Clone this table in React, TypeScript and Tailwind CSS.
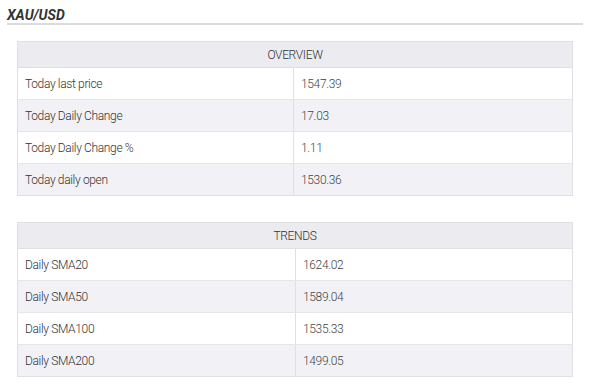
import React from "react";

type Row = [string, string];

const overview: Row[] = [
  ["Today last price", "1547.39"],
  ["Today Daily Change", "17.03"],
  ["Today Daily Change %", "1.11"],
  ["Today daily open", "1530.36"],
];

const trends: Row[] = [
  ["Daily SMA20", "1624.02"],
  ["Daily SMA50", "1589.04"],
  ["Daily SMA100", "1535.33"],
  ["Daily SMA200", "1499.05"],
];

function DataTable({
  title,
  rows,
  firstColClass,
}: {
  title: string;
  rows: Row[];
  firstColClass: string;
}) {
  return (
    <div className="border border-[#e0e0e3] text-[12px] font-light tracking-[-0.35px] text-[#333]">
      <div className="h-[26px] flex items-center justify-center bg-[#ececf0] border-b border-[#e0e0e3]">
        {title}
      </div>
      {rows.map(([label, value], i) => (
        <div
          key={label}
          className={
            i === rows.length - 1
              ? i % 2 === 1
                ? "flex h-[31px] bg-[#f2f2f6]"
                : "flex h-[31px] bg-white"
              : i % 2 === 1
              ? "flex h-[32px] bg-[#f2f2f6] border-b border-[#e6e6ea]"
              : "flex h-[32px] bg-white border-b border-[#e6e6ea]"
          }
        >
          <div className={`${firstColClass} flex items-center px-[7px] border-r border-[#e0e0e3]`}>
            {label}
          </div>
          <div className="flex-1 flex items-center px-[7px] text-[#444]">{value}</div>
        </div>
      ))}
    </div>
  );
}

export default function App() {
  return (
    <div className="w-[589px] h-[390px] bg-white font-['Roboto',sans-serif]">
      <div className="px-[7px] pr-[6px]">
        <div className="pt-[8px] leading-[15px] h-[25px] border-b-2 border-[#dcdcdc] text-[14px] font-bold italic text-[#333]">
          XAU/USD
        </div>
      </div>
      <div className="px-[17px] pr-[16px] pt-[16px] flex flex-col gap-[26px]">
        <DataTable title="OVERVIEW" rows={overview} firstColClass="w-[276px]" />
        <DataTable title="TRENDS" rows={trends} firstColClass="w-[278px]" />
      </div>
    </div>
  );
}
